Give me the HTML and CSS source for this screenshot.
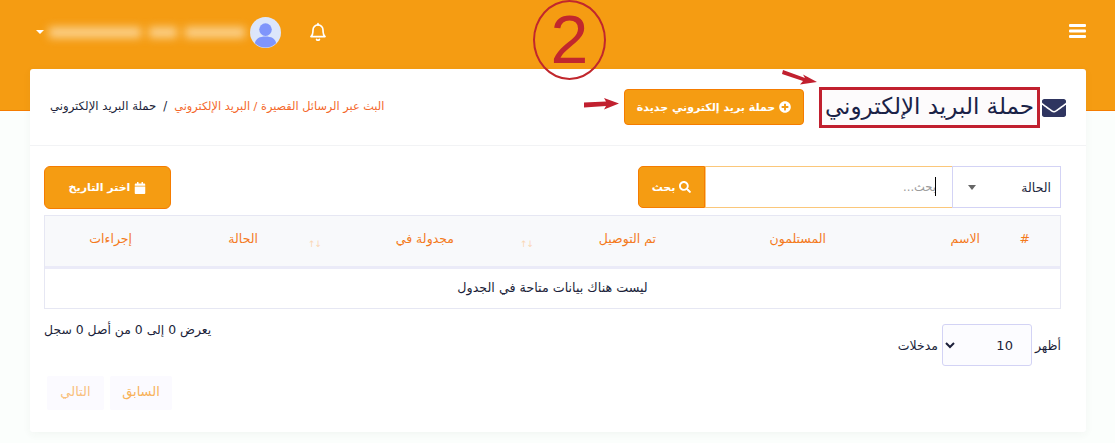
FILE: index.html
```html
<!DOCTYPE html>
<html lang="ar" dir="rtl">
<head>
    <meta charset="UTF-8">
    <title>حملة البريد الإلكتروني</title>
    <link rel="stylesheet" href="styles.css">
</head>
<body>
    <!-- top bar -->
    <header class="topbar">
        <svg class="menu-icon" viewBox="0 0 17 14"><rect width="17" height="3" y="0" rx="1"/><rect width="17" height="3" y="5.5" rx="1"/><rect width="17" height="3" y="11" rx="1"/></svg>
        <div class="user-area">
            <svg class="bell-icon" viewBox="0 0 24 24"><path d="M18 9.5A6 6 0 0 0 6 9.500c0 6-2.500 8-2.500 8h17s-2.500-2-2.500-8"/><path d="M13.700 21a2 2 0 0 1-3.400 0"/><path d="M12 3.500V2"/></svg>
            <svg class="avatar" viewBox="0 0 32 32"><circle cx="16" cy="16" r="16" fill="#dce6fb"/><circle cx="16" cy="13" r="6.500" fill="#7f95fb"/><path d="M5 27c1-5 5-7 11-7s10 2 11 7a16 16 0 0 1-22 0z" fill="#7f95fb"/></svg>
            <div class="user-name"><span class="blur-a"></span><span class="blur-b"></span><span class="blur-c"></span></div>
            <span class="user-caret"></span>
        </div>
    </header>

    <!-- main card -->
    <main class="card">
        <div class="card-head">
            <svg class="mail-icon" viewBox="0 0 512 512"><path d="M502.300 190.800c3.900-3.100 9.700-.2 9.700 4.700V400c0 26.500-21.500 48-48 48H48c-26.500 0-48-21.500-48-48V195.600c0-5 5.700-7.800 9.700-4.700 22.400 17.400 52.100 39.500 154.100 113.600 21.100 15.400 56.700 47.800 92.200 47.600 35.700.3 72-32.800 92.300-47.600 102-74.100 131.600-96.300 154-113.700zM256 320c23.200.4 56.600-29.200 73.400-41.400 132.700-96.300 142.800-104.700 173.400-128.700 5.800-4.500 9.200-11.500 9.200-18.900v-19c0-26.500-21.500-48-48-48H48C21.500 64 0 85.500 0 112v19c0 7.400 3.400 14.300 9.200 18.900 30.600 23.900 40.700 32.400 173.400 128.700 16.800 12.200 50.200 41.800 73.400 41.400z"/></svg>
            <h1 class="page-title">حملة البريد الإلكتروني</h1>
            <button class="btn btn-new" type="button">
                <svg class="btn-icon" viewBox="0 0 512 512"><path d="M256 8C119 8 8 119 8 256s111 248 248 248 248-111 248-248S393 8 256 8zm144 276c0 6.600-5.400 12-12 12h-92v92c0 6.600-5.400 12-12 12h-56c-6.600 0-12-5.400-12-12v-92h-92c-6.600 0-12-5.400-12-12v-56c0-6.600 5.400-12 12-12h92v-92c0-6.600 5.400-12 12-12h56c6.600 0 12 5.400 12 12v92h92c6.600 0 12 5.400 12 12v56z"/></svg>
                حملة بريد إلكتروني جديدة
            </button>
            <nav class="breadcrumb">
                <a href="#">البث عبر الرسائل القصيرة / البريد الإلكتروني</a>
                <span class="crumb-sep">/</span>
                <span>حملة البريد الإلكتروني</span>
            </nav>
        </div>

        <div class="card-body">
            <div class="toolbar">
                <div class="status-select">
                    <span>الحالة</span>
                    <span class="status-caret"></span>
                </div>
                <div class="search-box">
                    <input class="search-input" type="text" placeholder="بحث...">
                    <span class="text-caret"></span>
                </div>
                <button class="btn btn-search" type="button">
                    <svg class="btn-icon" viewBox="0 0 512 512"><path d="M505 442.700L405.300 343c-4.500-4.500-10.600-7-17-7H372c27.600-35.300 44-79.700 44-128C416 93.100 322.900 0 208 0S0 93.100 0 208s93.100 208 208 208c48.300 0 92.700-16.400 128-44v16.300c0 6.400 2.500 12.500 7 17l99.700 99.700c9.400 9.400 24.600 9.400 33.900 0l28.300-28.300c9.400-9.400 9.400-24.600.1-34zM208 336c-70.700 0-128-57.200-128-128 0-70.700 57.200-128 128-128 70.700 0 128 57.200 128 128 0 70.700-57.200 128-128 128z"/></svg>
                    بحث
                </button>
                <button class="btn btn-date" type="button">
                    <svg class="btn-icon" viewBox="0 0 448 512"><path d="M12 192h424c6.600 0 12 5.400 12 12v260c0 26.500-21.500 48-48 48H48c-26.500 0-48-21.500-48-48V204c0-6.600 5.400-12 12-12zm436-44v-36c0-26.500-21.500-48-48-48h-48V12c0-6.600-5.400-12-12-12h-40c-6.600 0-12 5.400-12 12v52H160V12c0-6.600-5.400-12-12-12h-40c-6.600 0-12 5.400-12 12v52H48C21.500 64 0 85.500 0 112v36c0 6.600 5.400 12 12 12h424c6.600 0 12-5.400 12-12z"/></svg>
                    اختر التاريخ
                </button>
            </div>

            <table class="data-table">
                <colgroup>
                    <col class="col-num"><col class="col-name"><col class="col-rec"><col class="col-del"><col class="col-sched"><col class="col-status"><col class="col-act">
                </colgroup>
                <thead>
                    <tr>
                        <th>#</th>
                        <th>الاسم</th>
                        <th>المستلمون</th>
                        <th class="sortable sort-wide">تم التوصيل</th>
                        <th class="sortable">مجدولة في</th>
                        <th>الحالة</th>
                        <th>إجراءات</th>
                    </tr>
                </thead>
                <tbody>
                    <tr><td class="empty-row" colspan="7">ليست هناك بيانات متاحة في الجدول</td></tr>
                </tbody>
            </table>

            <div class="table-foot">
                <div class="page-length">
                    <label for="entries">أظهر</label>
                    <select id="entries" class="length-select"><option>10</option><option>25</option><option>50</option></select>
                    <span>مدخلات</span>
                </div>
                <div class="table-nav">
                    <div class="table-info">يعرض 0 إلى 0 من أصل 0 سجل</div>
                    <div class="pager">
                        <a class="page-btn page-prev" href="#">السابق</a>
                        <a class="page-btn page-next" href="#">التالي</a>
                    </div>
                </div>
            </div>
        </div>
    </main>

    <!-- annotations drawn on the screenshot -->
    <div class="step-mark" dir="ltr">2</div>
    <svg class="arrows" viewBox="0 0 1115 443">
        <path d="M783 70 L805 78 L803 74.500 L817 82 L800 84.500 L803 81 L782 74 Z"/>
        <path d="M584 102.500 L606 101.500 L604 98 L619 103.500 L604 109.500 L606 106 L584 107.500 Z"/>
    </svg>
</body>
</html>
```

FILE: styles.css
```css
* {
    box-sizing: border-box;
}

body {
    margin: 0;
    background: #fbfefc;
    color: #1c1f3a;
    font-family: "DejaVu Sans", "Liberation Sans", sans-serif;
    font-size: 12px;
    height: 443px;
    overflow: hidden;
    position: relative;
}

/* top bar */
.topbar {
    height: 111px;
    background: #f59c12;
    border-bottom: 1px solid #f57c00;
    display: flex;
    justify-content: space-between;
    align-items: flex-start;
    padding: 24px 29px 0 36px;
}

.menu-icon {
    width: 17px;
    height: 14px;
    fill: #fff;
}

.user-area {
    display: flex;
    align-items: center;
    height: 16px;
}

.bell-icon {
    width: 20px;
    height: 20px;
    fill: none;
    stroke: #fff;
    stroke-width: 2;
    stroke-linecap: round;
    stroke-linejoin: round;
    margin-left: 27px;
}

.avatar {
    width: 31px;
    height: 31px;
    flex: none;
    margin-left: 5px;
}

.user-name {
    width: 199px;
    height: 14px;
    display: flex;
    gap: 8px;
    align-items: center;
    filter: blur(4px);
    margin-left: 2px;
}

.user-name span {
    height: 11px;
    background: #fbd08a;
}

.blur-a {
    width: 60px;
}

.blur-b {
    width: 28px;
}

.blur-c {
    width: 92px;
}

.user-caret {
    border-top: 4px solid #fff;
    border-left: 4px solid transparent;
    border-right: 4px solid transparent;
}

/* card */
.card {
    margin: -42px 29px 0 30px;
    height: 363px;
    background: #fff;
    border-radius: 3px;
    box-shadow: 0 2px 8px rgba(60, 70, 60, 0.05);
    position: relative;
}

.card-head {
    height: 77px;
    display: flex;
    align-items: center;
    padding: 0 20px;
    border-bottom: 1px solid #f2f3f5;
}

.mail-icon {
    width: 24px;
    height: 24px;
    fill: #2f3560;
    flex: none;
    margin-left: 2px;
    margin-top: 2px;
}

.page-title {
    margin: 0;
    width: 221px;
    height: 41px;
    border: 3px solid #c1202f;
    font-size: 23px;
    font-weight: normal;
    line-height: 33px;
    color: #1a2247;
    text-align: center;
    white-space: nowrap;
    background: #fdfbfc;
}

.btn {
    background: #f59c12;
    border: 1px solid #f57c00;
    border-radius: 4px;
    color: #fff;
    font-family: inherit;
    font-size: 11px;
    font-weight: bold;
    display: flex;
    align-items: center;
    justify-content: center;
    gap: 4px;
    padding: 0;
    cursor: pointer;
}

.btn-icon {
    width: 12px;
    height: 12px;
    fill: #fff;
    flex: none;
}

.btn-new {
    width: 180px;
    height: 36px;
    margin-right: 15px;
}

.breadcrumb {
    margin-right: auto;
    display: flex;
    align-items: center;
    gap: 7px;
    font-size: 11.700px;
    white-space: nowrap;
    margin-top: -2px;
}

.breadcrumb a {
    color: #f4672a;
    text-decoration: none;
    font-size: 11.300px;
}

.crumb-sep {
    color: #1c1f3a;
}

/* filters */
.card-body {
    padding: 20px 25px 0 14px;
}

.toolbar {
    display: flex;
    align-items: flex-start;
    height: 49px;
}

.status-select {
    width: 109px;
    height: 42px;
    border: 1px solid #d3d3f5;
    display: flex;
    align-items: center;
    justify-content: space-between;
    padding: 0 9px 0 15px;
    font-size: 12.500px;
}

.status-caret {
    border-top: 5px solid #666;
    border-left: 4px solid transparent;
    border-right: 4px solid transparent;
}

.search-box {
    width: 247px;
    height: 42px;
    position: relative;
}

.search-input {
    width: 100%;
    height: 100%;
    border: 1px solid #fbc77a;
    border-right: 0;
    padding: 0 16px;
    font-family: inherit;
    font-size: 11.500px;
    outline: none;
    background: #fff;
}

.search-input::placeholder {
    color: #9a9a9a;
}

.text-caret {
    position: absolute;
    top: 11px;
    right: 16px;
    width: 1px;
    height: 19px;
    background: #000;
}

.btn-search {
    width: 67px;
    height: 42px;
    border-radius: 0;
    border-top-left-radius: 5px;
    border-bottom-left-radius: 5px;
}

.btn-date {
    width: 127px;
    height: 43px;
    margin-right: auto;
    border-radius: 6px;
}

/* table */
.data-table {
    width: 1017px;
    table-layout: fixed;
    border-collapse: separate;
    border-spacing: 0;
    border: 1px solid #e6e7f3;
}

.col-num { width: 50px; }
.col-name { width: 154px; }
.col-rec { width: 170px; }
.col-del { width: 202px; }
.col-sched { width: 196px; }
.col-status { width: 126px; }
.col-act { width: 117px; }

.data-table th {
    height: 53px;
    background: #f8f9fb;
    border-bottom: 3px solid #ebebf8;
    color: #f47a1c;
    font-size: 12.500px;
    font-weight: normal;
    text-align: right;
    padding: 0 30px 5px 0;
    position: relative;
}

.sortable::after {
    content: "↑↓";
    direction: ltr;
    unicode-bidi: isolate;
    position: absolute;
    top: 23px;
    left: 20px;
    color: #fbd7b5;
    font-size: 9px;
    letter-spacing: -1px;
}

.sort-wide::after {
    left: 36px;
}

.empty-row {
    height: 39px;
    text-align: center;
    font-size: 12.700px;
    padding-bottom: 3px;
}

/* footer of the table */
.table-foot {
    display: flex;
    justify-content: space-between;
    align-items: flex-start;
    padding-top: 15px;
}

.page-length {
    display: flex;
    align-items: center;
    gap: 4px;
    font-size: 12.500px;
}

.length-select {
    width: 90px;
    height: 42px;
    margin-right: -1px;
    border: 1px solid #d3d3f5;
    border-radius: 3px;
    background: #fcfcff;
    color: #1c1f3a;
    font-family: inherit;
    font-size: 13px;
    padding: 0 14px;
}

.table-nav {
    display: flex;
    flex-direction: column;
    align-items: flex-end;
}

.table-info {
    font-size: 12.400px;
    line-height: 15px;
    margin-top: -2px;
    white-space: nowrap;
}

.pager {
    display: flex;
    gap: 6px;
    margin-top: 39px;
    margin-left: 3px;
}

.page-btn {
    height: 34px;
    line-height: 32px;
    text-align: center;
    background: #fbfaff;
    color: #f8b25a;
    text-decoration: none;
    font-size: 13px;
    border-radius: 2px;
}

.page-prev {
    width: 62px;
}

.page-next {
    width: 57px;
    color: #f9c07c;
}

/* annotations */
.step-mark {
    position: absolute;
    top: 0;
    left: 533px;
    width: 73px;
    height: 80px;
    border: 2.500px solid #c1272d;
    border-radius: 50%;
    color: #c1272d;
    font-family: "Liberation Sans", sans-serif;
    font-size: 68px;
    line-height: 75px;
    text-align: center;
}

.arrows {
    position: absolute;
    top: 0;
    left: 0;
    width: 1115px;
    height: 443px;
    fill: #c1202f;
    pointer-events: none;
}
```
